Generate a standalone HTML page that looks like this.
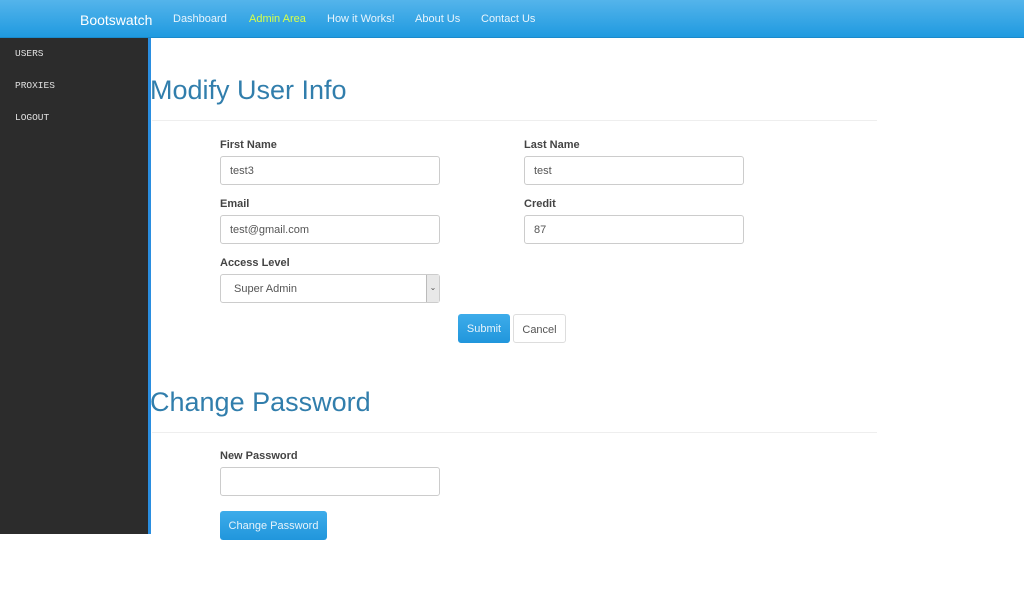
<!DOCTYPE html>
<html><head><style>
*{box-sizing:border-box;margin:0;padding:0}
body{width:1024px;height:612px;background:#fff;font-family:"Liberation Sans",Arial,sans-serif;position:relative;overflow:hidden;color:#555}
.nav{position:absolute;left:0;top:0;width:1024px;height:38px;background:linear-gradient(#54b4eb,#1f9ae0);border-bottom:1px solid #1a8acb}
.nav span{position:absolute;top:13px;font-size:11px;color:#e8f4fc}
.brand{font-size:14px!important;top:12px!important;color:#fff!important}
.side{position:absolute;left:0;top:38px;height:496px;background:#2c2c2c;border-right:3px solid #2a8ee0;width:151px}
.side div{position:absolute;left:15px;font-family:"Liberation Mono",monospace;font-size:9.5px;color:#e0e0e0}
h1{position:absolute;left:150px;font-weight:normal;font-size:27px;color:#317eac}
hr{position:absolute;left:152px;width:725px;border:0;border-top:1px solid #eee}
label{position:absolute;font-size:11px;font-weight:bold;color:#444}
.in{position:absolute;width:220px;height:29px;border:1px solid #ccc;border-radius:3px;font-size:11px;color:#555;padding:8px 9px}
.btn{position:absolute;height:29px;border-radius:3px;font-size:11px;padding-top:9px;text-align:center}
.pri{background:linear-gradient(#3eacea,#2196dc);color:#e6f3fb}
</style></head><body>
<div class="nav">
<span class="brand" style="left:80px">Bootswatch</span>
<span style="left:173px">Dashboard</span>
<span style="left:249px;color:#d6ff4a">Admin Area</span>
<span style="left:327px">How it Works!</span>
<span style="left:415px">About Us</span>
<span style="left:481px">Contact Us</span>
</div>
<div class="side">
<div style="top:10px">USERS</div>
<div style="top:42px">PROXIES</div>
<div style="top:74px">LOGOUT</div>
</div>
<h1 style="top:75px">Modify User Info</h1>
<hr style="top:120px">
<label style="left:220px;top:139px">First Name</label>
<label style="left:524px;top:139px">Last Name</label>
<div class="in" style="left:220px;top:156px">test3</div>
<div class="in" style="left:524px;top:156px">test</div>
<label style="left:220px;top:198px">Email</label>
<label style="left:524px;top:198px">Credit</label>
<div class="in" style="left:220px;top:215px">test@gmail.com</div>
<div class="in" style="left:524px;top:215px">87</div>
<label style="left:220px;top:257px">Access Level</label>
<div class="in" style="left:220px;top:274px;padding-left:13px">Super Admin<div style="position:absolute;right:0;top:0;width:13px;height:27px;background:#e8e8e8;border-left:1px solid #bbb;font-size:8px;text-align:center;padding-top:8px">&#8964;</div></div>
<div class="btn pri" style="left:458px;top:314px;width:52px">Submit</div>
<div class="btn" style="left:513px;top:314px;width:53px;border:1px solid #ddd;color:#555">Cancel</div>
<h1 style="top:387px">Change Password</h1>
<hr style="top:432px">
<label style="left:220px;top:450px">New Password</label>
<div class="in" style="left:220px;top:467px"></div>
<div class="btn pri" style="left:220px;top:511px;width:107px">Change Password</div>
</body></html>
